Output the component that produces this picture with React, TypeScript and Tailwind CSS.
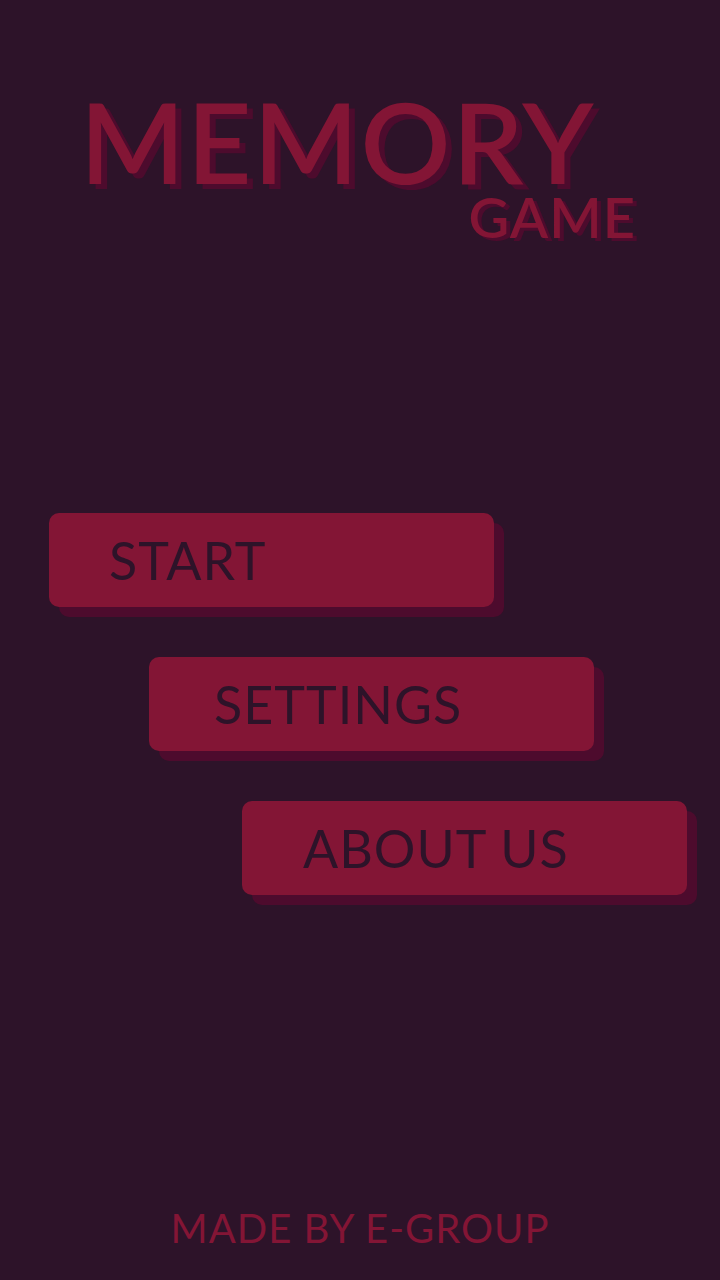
import React from 'react';

const buttons = [
  { label: 'START', offset: 'ml-[49px]', pad: 'pl-[60px]' },
  { label: 'SETTINGS', offset: 'ml-[149px]', pad: 'pl-[65px]' },
  { label: 'ABOUT US', offset: 'ml-[242px]', pad: 'pl-[61px]' },
];

export default function App() {
  return (
    <div
      className="w-[720px] h-[1280px] bg-[#2d1329] flex flex-col overflow-hidden"
      style={{ fontFamily: 'Lato, "Open Sans", sans-serif' }}
    >
      {/* Title */}
      <div className="pt-[91px] pl-[80px] flex flex-col w-[636px]">
        <h1 className="text-[112px] leading-[100px] font-semibold text-[#831535] tracking-[2px] [text-shadow:6px_5px_0_#4d0b2d]">
          MEMORY
        </h1>
        <div className="self-end text-[56px] leading-[52px] font-semibold text-[#831535] tracking-[1px] [text-shadow:4px_3px_0_#4d0b2d]">
          GAME
        </div>
      </div>

      {/* Menu */}
      <div className="mt-[270px] flex flex-col gap-[50px]">
        {buttons.map((b) => (
          <button
            key={b.label}
            className={`${b.offset} ${b.pad} w-[445px] h-[94px] rounded-[10px] bg-[#831535] shadow-[10px_10px_0_#4d0b2d] flex items-center text-left text-[52px] font-normal text-[#2d1329] tracking-[1px]`}
          >
            {b.label}
          </button>
        ))}
      </div>

      {/* Footer */}
      <div className="mt-auto mb-[28px] text-center text-[40px] leading-[48px] text-[#831535] tracking-[1px]">
        MADE BY E-GROUP
      </div>
    </div>
  );
}
